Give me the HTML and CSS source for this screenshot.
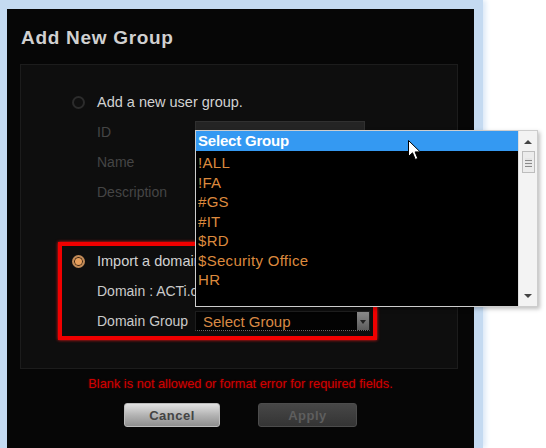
FILE: index.html
```html
<!DOCTYPE html>
<html lang="en">
<head>
    <meta charset="UTF-8">
    <title>Add New Group</title>
    <link rel="stylesheet" href="styles.css">
</head>
<body>
    <div class="glow">
        <div class="dialog">
            <h2 class="title">Add New Group</h2>

            <div class="panel">
                <div class="row option">
                    <span class="radio"></span>
                    <span class="text">Add a new user group.</span>
                </div>
                <div class="row field off"><span class="label">ID</span><span class="input"></span></div>
                <div class="row field off"><span class="label">Name</span><span class="input"></span></div>
                <div class="row field off"><span class="label">Description</span><span class="input"></span></div>

                <div class="import">
                    <div class="row option">
                        <span class="radio on"></span>
                        <span class="text">Import a domain user group.</span>
                    </div>
                    <div class="row field"><span>Domain : ACTi.com</span></div>
                    <div class="row field">
                        <span class="label">Domain Group</span>
                        <div class="select"><span>Select Group</span><span class="drop"></span></div>
                    </div>
                </div>
            </div>

            <p class="error">Blank is not allowed or format error for required fields.</p>

            <div class="buttons">
                <button class="btn cancel">Cancel</button>
                <button class="btn apply">Apply</button>
            </div>

            <!-- open list of the Domain Group select, drawn over the form -->
            <div class="list">
                <div class="options">
                    <div class="opt sel">Select Group</div>
                    <div class="items">
                        <div class="opt">!ALL</div>
                        <div class="opt">!FA</div>
                        <div class="opt">#GS</div>
                        <div class="opt">#IT</div>
                        <div class="opt">$RD</div>
                        <div class="opt">$Security Office</div>
                        <div class="opt">HR</div>
                    </div>
                </div>
                <div class="scroll">
                    <span class="up"></span>
                    <span class="thumb"></span>
                    <span class="down"></span>
                </div>
            </div>

            <svg class="cursor" width="14" height="21" viewBox="0 0 14 21">
                <path d="M0.5 0.5 L0.5 16.5 L4.5 12.8 L7.3 19.5 L9.8 18.4 L7.1 11.9 L12.2 11.9 Z" fill="#fff" stroke="#000" stroke-width="1"/>
            </svg>
        </div>
    </div>
</body>
</html>
```

FILE: styles.css
```css
body { margin: 0; background: #fff; font-family: "Liberation Sans", Arial, sans-serif; }

.glow { width: 483px; height: 448px; box-sizing: border-box; padding: 9px 9px 0 7px; background: #c4daf1; box-shadow: 3px 0 5px #dce9f7; }
.dialog { position: relative; width: 467px; height: 439px; background: #060606; }

.title { margin: 0; padding: 18px 0 0 14px; font-size: 19px; line-height: 22px; letter-spacing: .7px; font-weight: bold; color: #d0d0d0; }

.panel { margin: 15px 16px 0 13px; height: 305px; box-sizing: border-box; padding: 22px 0 0 51px; background: #0e0e0e; border: 1px solid #1c1c1c; }

.row { display: flex; align-items: center; height: 30px; }
.option .text { font-size: 14.5px; color: #d2d2d2; }
.radio { width: 13px; height: 13px; margin-right: 12px; box-sizing: border-box; border-radius: 50%; border: 2px solid #2c2c2c; background: #101010; }
.radio.on { border-color: #c08a58; background: #e79f5c; box-shadow: inset 0 0 0 1px #3a2412; }

.field { padding-left: 25px; font-size: 14px; color: #cacaca; }
.field.off { color: #454545; }
.label { width: 98px; flex: none; }
.input { width: 170px; height: 22px; box-sizing: border-box; background: #242424; border: 1px solid #303030; }

.import { margin: 35px 0 0 -14px; width: 319px; height: 98px; box-sizing: border-box; padding-left: 10px; border: 4px solid #f00000; box-shadow: 0 0 3px #ff1a1a; }

.select { display: flex; align-items: center; width: 175px; height: 20px; box-sizing: border-box; padding-left: 7px; background: #030303; border: 1px solid #1e1e1e; border-bottom: 1px dotted #6a6a6a; font-size: 15px; color: #d98a45; }
.drop { position: relative; margin-left: auto; width: 12px; height: 100%; background: linear-gradient(#8a8a8a, #5c5c5c); }
.drop::after { content: ""; position: absolute; left: 3px; top: 8px; border-left: 3px solid transparent; border-right: 3px solid transparent; border-top: 4px solid #222; }

.error { margin: 7px 0 0; text-align: center; font-size: 12.8px; line-height: 16px; color: #d00000; text-shadow: 0 0 2px rgba(255, 0, 0, .4); }

.buttons { display: flex; justify-content: center; gap: 38px; margin-top: 11px; }
.btn { height: 24px; border-radius: 3px; font-family: inherit; font-size: 13px; font-weight: bold; letter-spacing: .5px; }
.cancel { width: 96px; background: linear-gradient(#e2e2e2, #b4b4b4 50%, #8e8e8e); border: 1px solid #bcbcbc; color: #444; }
.apply { width: 99px; background: linear-gradient(#474747, #343434); border: 1px solid #4c4c4c; color: #5e5e5e; }

.list { position: absolute; left: 188px; top: 121px; width: 343px; height: 177px; box-sizing: border-box; display: flex; background: #000; border: 1px solid #cdcdcd; box-shadow: 2px 2px 4px rgba(0, 0, 0, .25); }
.options { flex: 1; }
.opt { height: 19.5px; line-height: 19.5px; padding-left: 2px; font-size: 15px; letter-spacing: .3px; color: #dc8a3e; }
.opt.sel { height: 20px; line-height: 20px; background: #3499f2; color: #fff; font-weight: bold; letter-spacing: -.2px; }
.items { padding-top: 2px; }

.scroll { width: 18px; display: flex; flex-direction: column; align-items: center; background: #f3f3f3; border-left: 1px solid #dedede; }
.up { margin-top: 9px; border-left: 4px solid transparent; border-right: 4px solid transparent; border-bottom: 4px solid #444; }
.thumb { margin-top: 7px; width: 13px; height: 22px; box-sizing: border-box; border: 1px solid #bdbdbd; background: repeating-linear-gradient(#e6e6e6 0 2px, #8a8a8a 2px 3px) center / 7px 9px no-repeat, #ececec; }
.down { margin-top: auto; margin-bottom: 8px; border-left: 4px solid transparent; border-right: 4px solid transparent; border-top: 4px solid #444; }

.cursor { position: absolute; left: 401px; top: 131px; }
```
